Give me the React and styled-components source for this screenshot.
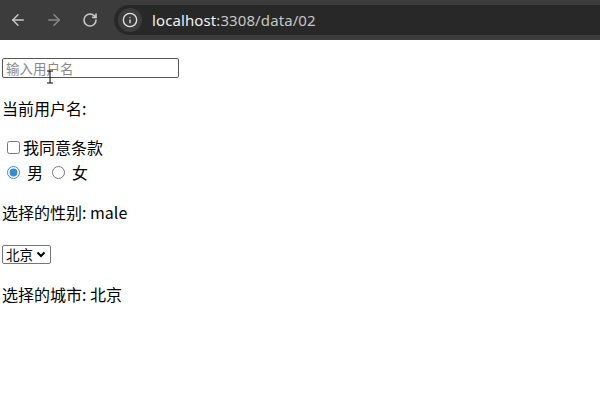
import React, { useState } from "react";
import styled, { createGlobalStyle } from "styled-components";
import { ArrowLeft, ArrowRight, RotateCw, Info } from "lucide-react";

const GlobalStyle = createGlobalStyle`
  html, body {
    margin: 0;
    padding: 0;
    background: #ffffff;
  }
  body {
    font-family: "Noto Sans", "Noto Sans CJK SC", sans-serif;
  }
`;

const Window = styled.div`
  width: 600px;
  height: 400px;
  overflow: hidden;
  background: #ffffff;
`;

const Toolbar = styled.div`
  height: 40px;
  background: #3c3c3c;
  display: flex;
  align-items: center;
  box-sizing: border-box;
`;

const NavButton = styled.div`
  width: 36px;
  height: 30px;
  display: flex;
  align-items: center;
  justify-content: center;
  color: ${(p) => (p.$dim ? "#8a8a8a" : "#c8c8c8")};
`;

const UrlBox = styled.div`
  flex: 1;
  height: 30px;
  margin-left: 6px;
  background: #282828;
  border-radius: 15px 0 0 15px;
  display: flex;
  align-items: center;
  padding-left: 4px;
`;

const InfoChip = styled.div`
  width: 24px;
  height: 24px;
  border-radius: 50%;
  background: #3c3c3c;
  display: flex;
  align-items: center;
  justify-content: center;
  color: #e3e3e3;
`;

const Url = styled.span`
  margin-left: 10px;
  font-family: "Noto Sans", sans-serif;
  font-size: 15px;
  color: #c4c7c5;
  letter-spacing: 0.1px;

  b {
    font-weight: normal;
    color: #f1f1f1;
  }
`;

const Content = styled.div`
  position: relative;
  padding: 18px 2px 0;
  display: flex;
  flex-direction: column;
  align-items: flex-start;
  color: #000;
  font-family: "Noto Sans CJK SC", sans-serif;
  font-size: 16px;
`;

const TextInput = styled.input`
  box-sizing: border-box;
  width: 177px;
  height: 20px;
  margin: 0;
  padding: 0 3px;
  border: 1px solid #555;
  border-radius: 2px;
  font-family: "Noto Sans CJK SC", sans-serif;
  font-size: 13.5px;
  outline: none;

  &::placeholder {
    color: #8a8a8a;
  }
`;

const Line = styled.div`
  height: 24px;
  line-height: 24px;
  margin-top: ${(p) => p.$gap}px;
  display: flex;
  align-items: center;
  white-space: nowrap;
`;

const Box = styled.input`
  margin: 0 3px 0 5px;
  width: 13px;
  height: 13px;
`;

const Radio = styled.input`
  margin: 0 7px 0 5px;
  width: 13px;
  height: 13px;
  accent-color: #3b8ad0;
`;

const Choice = styled.label`
  display: flex;
  align-items: center;
  margin-right: 4px;
`;

const SelectWrap = styled.div`
  position: relative;
  margin-top: 21px;
  display: flex;
`;

const CitySelect = styled.select`
  appearance: none;
  box-sizing: border-box;
  height: 19px;
  width: 49px;
  margin: 0;
  padding: 0 0 0 3px;
  line-height: 17px;
  font-family: "Noto Sans CJK SC", sans-serif;
  font-size: 13.5px;
  border: 1px solid #767676;
  border-radius: 2px;
  background: #fff;
  color: #000;
  outline: none;
`;

const Chevron = styled.svg`
  position: absolute;
  right: 5px;
  top: 6px;
  pointer-events: none;
`;

const Caret = styled.svg`
  position: absolute;
  left: 45px;
  top: 30px;
`;

export default function App() {
  const [name, setName] = useState("");
  const [gender, setGender] = useState("male");
  const [city, setCity] = useState("北京");

  return (
    <Window>
      <GlobalStyle />
      <Toolbar>
        <NavButton>
          <ArrowLeft size={18} strokeWidth={2} />
        </NavButton>
        <NavButton $dim>
          <ArrowRight size={18} strokeWidth={2} />
        </NavButton>
        <NavButton>
          <RotateCw size={16} strokeWidth={2.4} />
        </NavButton>
        <UrlBox>
          <InfoChip>
            <Info size={16} strokeWidth={2} />
          </InfoChip>
          <Url>
            <b>localhost</b>:3308/data/02
          </Url>
        </UrlBox>
      </Toolbar>
      <Content>
        <TextInput
          placeholder="输入用户名"
          value={name}
          onChange={(e) => setName(e.target.value)}
        />
        <Caret width="10" height="14" viewBox="0 0 10 14">
          <path d="M2 1h6M5 1v12M2 13h6" stroke="#000" strokeWidth="1" fill="none" />
        </Caret>
        <Line $gap={18}>当前用户名: {name}</Line>
        <Line $gap={15}>
          <Box type="checkbox" />
          我同意条款
        </Line>
        <Line $gap={1}>
          <Choice>
            <Radio
              type="radio"
              name="gender"
              checked={gender === "male"}
              onChange={() => setGender("male")}
            />
            男
          </Choice>
          <Choice>
            <Radio
              type="radio"
              name="gender"
              checked={gender === "female"}
              onChange={() => setGender("female")}
            />
            女
          </Choice>
        </Line>
        <Line $gap={16}>选择的性别: {gender}</Line>
        <SelectWrap>
          <CitySelect value={city} onChange={(e) => setCity(e.target.value)}>
            <option value="北京">北京</option>
            <option value="上海">上海</option>
            <option value="广州">广州</option>
          </CitySelect>
          <Chevron width="10" height="7" viewBox="0 0 10 7">
            <path d="M1.5 1.5L5 5L8.5 1.5" stroke="#000" strokeWidth="2" fill="none" />
          </Chevron>
        </SelectWrap>
        <Line $gap={18}>选择的城市: {city}</Line>
      </Content>
    </Window>
  );
}
